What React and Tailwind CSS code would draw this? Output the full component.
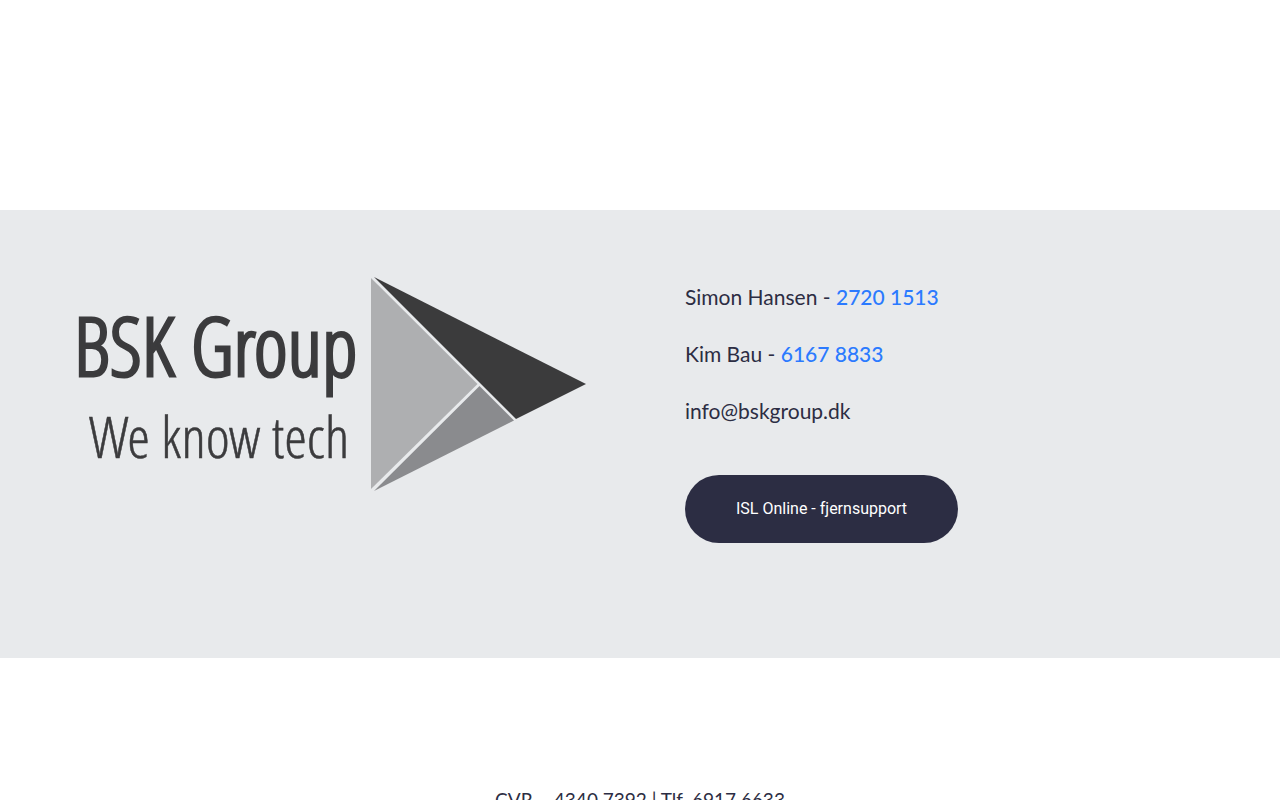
const contacts = [
  { name: 'Simon Hansen', phone: '2720 1513' },
  { name: 'Kim Bau', phone: '6167 8833' },
];

const Logo = () => (
  <svg viewBox="-4 0 514 216" className="w-full max-w-[514px]" role="img" aria-label="BSK Group - We know tech">
    {/* wordmark */}
    <g fill="#3b3b3d" stroke="#3b3b3d" className="font-['Open_Sans_Condensed_Light','Open_Sans_Condensed',sans-serif] font-light">
      <text x="-3" y="100" fontSize="81" strokeWidth="3">
        BSK <tspan x="114">Group</tspan>
      </text>
      <text x="12" y="182" fontSize="58" strokeWidth="0.5">
        We know tech
      </text>
    </g>
    {/* arrow */}
    <polygon points="294,2 400.5,108 294,213" fill="#aeafb1" />
    <polygon points="297,1 509,108 439,143" fill="#3b3b3c" />
    <polygon points="402.5,110 437,144.5 297,215" fill="#8a8b8e" />
  </svg>
);

const Contact = () => (
  <div className="flex flex-col items-start gap-[29px] text-[21px] leading-7">
    {contacts.map((c) => (
      <p key={c.phone}>
        {c.name} -{' '}
        <a href={`tel:${c.phone.replace(' ', '')}`} className="font-medium text-[#2b7aff]">
          {c.phone}
        </a>
      </p>
    ))}
    <p>info@bskgroup.dk</p>
    <button
      type="button"
      className="mt-[21px] rounded-full bg-[#2c2d43] px-[51px] py-5 font-['Roboto',sans-serif] text-base leading-7 text-white"
    >
      ISL Online - fjernsupport
    </button>
  </div>
);

const App = () => (
  <div className="min-h-screen bg-white pt-[210px] font-['Lato',sans-serif] text-[#2c2d43]">
    <main className="grid grid-cols-2 bg-[#e8eaec] pt-[66px] pb-[115px]">
      <div className="pr-[53px] pl-[73px]">
        <Logo />
      </div>
      <div className="pt-[7px] pr-6 pl-[45px]">
        <Contact />
      </div>
    </main>
    <footer className="pt-32 pb-16 text-center text-[19px] leading-7">
      <p>CVR. - 4340 7392 | Tlf. 6917 6633</p>
    </footer>
  </div>
);

export default App;
